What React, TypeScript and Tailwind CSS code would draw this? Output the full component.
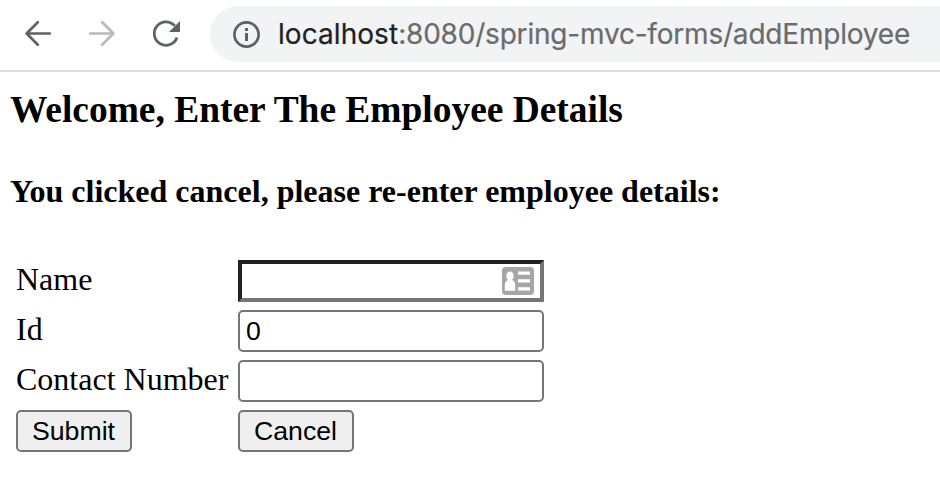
import type { ReactNode } from "react";

function Toolbar() {
  return (
    <header className="flex h-[72px] items-start border-b-2 border-[#dadce0] bg-white">
      <nav className="flex h-[70px] w-[210px] shrink-0 items-start">
        <svg width="210" height="70" viewBox="0 0 210 70" fill="none" strokeLinecap="round" strokeLinejoin="round">
          <path d="M49.8 33.5H26.6M37.8 22.3L26.6 33.5L37.8 44.7" stroke="#5f6368" strokeWidth="2.7" />
          <path d="M90.2 33.5H113.4M102.2 22.3L113.4 33.5L102.2 44.7" stroke="#bababa" strokeWidth="2.7" />
          <path d="M174.8 25.9A11.7 11.7 0 1 0 177 37.5" stroke="#5f6368" strokeWidth="2.8" strokeLinecap="butt" />
          <path d="M180 21V32H169Z" fill="#5f6368" />
        </svg>
      </nav>
      <div className="mt-[6px] flex h-[56px] min-w-0 flex-1 items-center overflow-hidden rounded-l-full bg-[#f1f3f4] pl-[22px]">
        <svg className="shrink-0" width="28" height="28" viewBox="0 0 28 28" fill="none">
          <circle cx="14.5" cy="14.5" r="12.1" stroke="#5f6062" strokeWidth="2.7" />
          <path d="M13 8H16V11H13ZM13 13H16V21H13Z" fill="#5f6062" />
        </svg>
        <span className="ml-[18px] whitespace-nowrap font-[Inter,sans-serif] text-[28px] leading-[34px] tracking-[-0.2px] text-[#6a6b6d] [-webkit-text-stroke:0.2px]">
          <span className="tracking-[0.06px] text-[#202124]">localhost</span>:8080/spring-mvc-forms/addEmployee
        </span>
      </div>
    </header>
  );
}

function Row({ label, children }: { label: ReactNode; children: ReactNode }) {
  return (
    <div className="grid h-[42px] grid-cols-[222px_306px]">
      <div className="whitespace-nowrap text-[32px] leading-[38px]">{label}</div>
      <div className="flex">{children}</div>
    </div>
  );
}

function Button({ type, children }: { type: "submit" | "button"; children: ReactNode }) {
  return (
    <button
      type={type}
      className="flex h-[42px] w-[116px] items-center justify-center rounded-[5px] border-2 border-[#767676] bg-[#efefef] pr-px font-['Liberation_Sans',Arial,sans-serif] text-[26.67px] leading-[30px] text-black"
    >
      {children}
    </button>
  );
}

const field =
  "h-[42px] w-[306px] rounded-[5px] border-2 border-[#767676] bg-white px-[6px] font-['Liberation_Sans',Arial,sans-serif] text-[26.67px] leading-[30px] text-black outline-none";

export default function App() {
  return (
    <div className="h-[482px] w-[940px] overflow-hidden bg-white font-['Liberation_Serif','Times_New_Roman',serif] text-black">
      <Toolbar />
      <main className="pl-[10px] pt-[17px]">
        <h3 className="whitespace-nowrap text-[37.44px] font-bold leading-[42px]">
          Welcome, Enter The Employee Details
        </h3>
        <h4 className="mt-[42px] whitespace-nowrap text-[32px] font-bold leading-[36px]">
          You clicked cancel, please re-enter employee details:
        </h4>
        <form className="mt-[51px] flex flex-col gap-2 pl-[6px]" onSubmit={(e) => e.preventDefault()}>
          <Row label="Name">
            <div className="flex h-[42px] w-[306px] items-center border-4 border-b-[#767676] border-l-[#212121] border-r-[#767676] border-t-[#212121] bg-white pr-[6px]">
              <input aria-label="Name" className="h-full min-w-0 flex-1 outline-none" />
              <svg width="32" height="28" viewBox="0 0 32 28" fill="none">
                <rect width="32" height="28" rx="4" fill="#a6a6a6" />
                <path
                  d="M8 4.5C5.7 4.5 4.3 6.3 4.3 8.8C4.3 10.8 4.9 12 6 13.1C3.8 14.1 2.8 15.6 2.8 18V23.8H13.2V18C13.2 15.6 12.2 14.1 10 13.1C11.1 12 11.7 10.8 11.7 8.8C11.7 6.3 10.3 4.5 8 4.5Z"
                  fill="white"
                />
                <path d="M16 6.2H28M16 13.9H28M16 21.8H28" stroke="white" strokeWidth="3.2" />
              </svg>
            </div>
          </Row>
          <Row label="Id">
            <input aria-label="Id" className={field} defaultValue="0" />
          </Row>
          <Row label="Contact Number">
            <input aria-label="Contact Number" className={field} />
          </Row>
          <Row label={<Button type="submit">Submit</Button>}>
            <Button type="button">Cancel</Button>
          </Row>
        </form>
      </main>
    </div>
  );
}
